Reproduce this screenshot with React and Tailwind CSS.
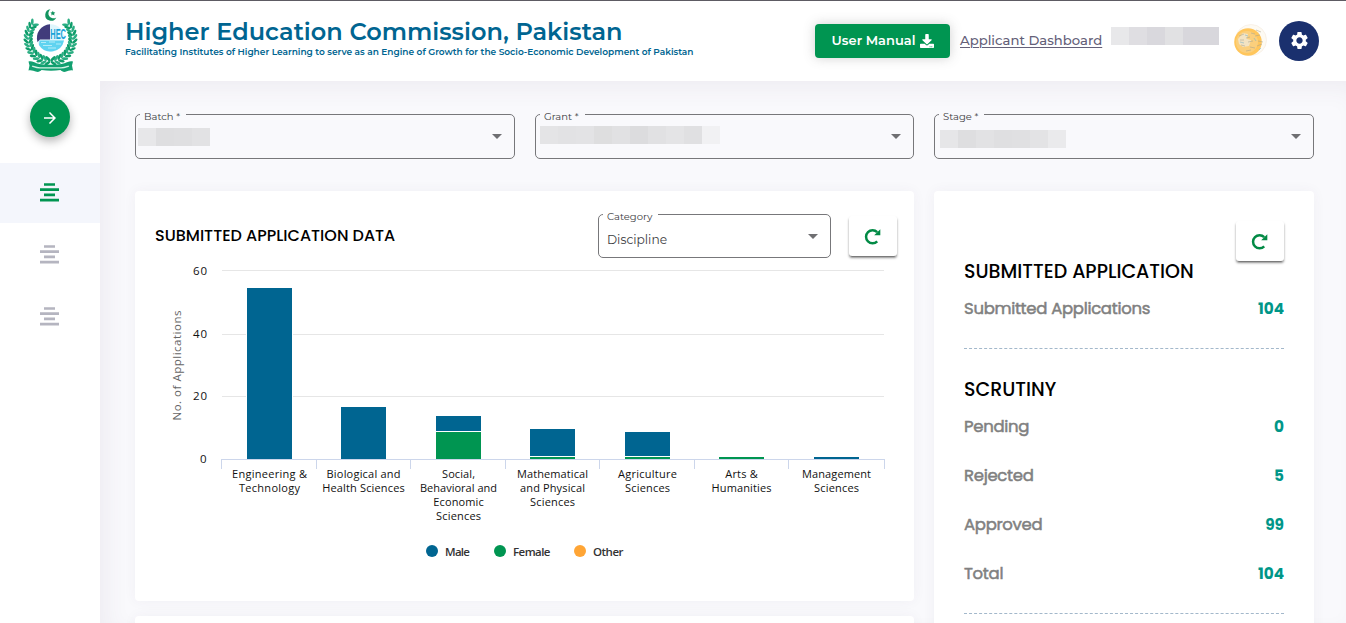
import React from "react";
import { FaDownload } from "react-icons/fa";
import { MdSettings, MdArrowForward } from "react-icons/md";

function Logo() {
  const leaves = [];
  for (let i = 0; i < 14; i++) {
    const a = ((138 + i * 9.6) * Math.PI) / 180;
    for (const side of [1, -1]) {
      for (const r of [20, 24.5]) {
        const cx = 27.5 + side * Math.cos(a) * r;
        const cy = 30.5 - Math.sin(a) * r * 1.02;
        const deg = (side * (-a * 180)) / Math.PI + (r === 24.5 ? 50 : 130) * side;
        leaves.push(
          <ellipse key={`${i}${side}${r}`} cx={cx} cy={cy} rx="3.300" ry="1.350" fill={i % 2 ? "#0f9c6a" : "#2bae83"} transform={`rotate(${deg} ${cx} ${cy})`} />
        );
      }
    }
  }
  return (
    <svg width="56" height="66" viewBox="0 0 56 66">
      {leaves}
      <path d="M27.500 1.200a5.800 5.800 0 1 0 5.800 8.200a5 5 0 1 1-5.800-8.200z" fill="#12945f" />
      <path d="M29.800 2.800l.8 1.500 1.700.2-1.200 1.200.3 1.700-1.600-.8-1.500.8.3-1.700-1.200-1.200 1.700-.2z" fill="#12945f" />
      <circle cx="27.500" cy="30" r="14.500" fill="#ffffff" />
      <circle cx="27.500" cy="30" r="13.700" fill="#dff6fc" />
      <path d="M27 16.300A13.700 13.700 0 0 0 14.500 34L17 31.500H27z" fill="#413b7b" />
      <path d="M16.500 32.500H41A13.700 13.700 0 0 1 16 37z" fill="#5fd3f0" />
      <path d="M18 34.500h5M26 34h6M20 37.500h9M25 40h8M33 36h5" stroke="#b4ecf8" strokeWidth="1" />
      <g transform="translate(27.300 30.500) scale(.48 1)">
        <text x="0" y="0" fontSize="15.500" fontWeight="700" fontFamily="Liberation Sans, sans-serif" fill="#1ba3d8">HEC</text>
      </g>
      <path d="M5.500 53.500c3.500-.8 5.500.6 8 1.800 8 2 20 2 28 0 3-1.200 5-2.600 8.500-1.800l-1 4 1 5c-3-.7-5 .6-7.500 1.300-2 .4-4-.5-5-1.700-6 1-13 1-19 0-1 1.200-3 2.100-5 1.700-3-.7-5-2-8-1.300l1-5z" fill="#12a070" />
      <path d="M9 58c3 1 5 1.800 8 1.800h21c3 0 5-.8 8-1.800" stroke="#d7f3e6" strokeWidth="1.200" fill="none" />
    </svg>
  );
}

function Blocks({ colors, className }) {
  return (
    <div className={`flex ${className}`}>
      {colors.map((c, i) => (
        <div key={i} className="h-[18px] w-[18px]" style={{ backgroundColor: c }} />
      ))}
    </div>
  );
}

function Caret() {
  return (
    <svg width="10" height="5" viewBox="0 0 10 5" className="shrink-0">
      <path d="M0 0h10L5 5z" fill="#6f6f72" />
    </svg>
  );
}

function SelectField({ label, children, className, contentClass }) {
  return (
    <fieldset className={`min-w-0 rounded-[5px] border border-[#77777a] ${className}`}>
      <legend className="ml-1 h-[13px] pr-[6px] pl-1 text-[10px] leading-[17px] text-[#3c3c3f]">{label}</legend>
      <div className={`flex items-start justify-between pr-3 ${contentClass}`}>{children}</div>
    </fieldset>
  );
}

function RefreshButton() {
  return (
    <button className="flex h-10 w-12 shrink-0 items-center justify-center rounded-[3px] bg-white pr-px shadow-[0_3px_1px_-2px_rgba(0,0,0,.25),0_2px_2px_0_rgba(0,0,0,.26),0_2px_3px_0_rgba(0,0,0,.2)]">
      <svg width="17" height="17" viewBox="0 0 17 17" fill="none">
        <path d="M13.200 13.300A6.500 6.500 0 1 1 13.200 4.200" stroke="#028a45" strokeWidth="2.500" />
        <path d="M16.300 1.200v6.100H10.200z" fill="#028a45" />
      </svg>
    </button>
  );
}

const BARS = [
  { x: 247, parts: [[288, 459, "#006591"]], lines: [["Engineering &", 75], ["Technology", 61]] },
  { x: 341, parts: [[407, 459, "#006591"]], lines: [["Biological and", 74], ["Health Sciences", 82.5]] },
  { x: 436, parts: [[416, 431, "#006591"], [432, 459, "#009551"]], lines: [["Social,", 33], ["Behavioral and", 77], ["Economic", 50.5], ["Sciences", 45]] },
  { x: 530, parts: [[429, 456, "#006591"], [457, 459, "#009551"]], lines: [["Mathematical", 71], ["and Physical", 65], ["Sciences", 45]] },
  { x: 625, parts: [[432, 456, "#006591"], [457, 459, "#009551"]], lines: [["Agriculture", 59], ["Sciences", 45]] },
  { x: 719, parts: [[457, 459, "#009551"]], lines: [["Arts &", 32.5], ["Humanities", 60]] },
  { x: 814, parts: [[457, 459, "#006591"]], lines: [["Management", 69], ["Sciences", 45]] },
];

function Chart() {
  return (
    <svg width="740" height="310" viewBox="155 260 740 310" fontFamily="'Lucida Grande','Lucida Sans Unicode','Open Sans',sans-serif" className="block">
      {[[270.5, "60"], [334.5, "40"], [396.5, "20"]].map(([y, t]) => (
        <g key={t}>
          <path d={`M222 ${y}H884`} stroke="#e6e6e6" />
          <text x="193" y={t === "60" ? 275 : y + 3.5} fontSize="11.500" fill="#111" textLength="14">{t}</text>
        </g>
      ))}
      <text x="200" y="463" fontSize="11.500" fill="#111">0</text>
      <text transform="translate(181 420.500) rotate(-90)" fontSize="11.500" fill="#666" textLength="110">No. of Applications</text>
      <path d="M221 459.500H885" stroke="#ccd6eb" />
      {[221.5, 316.5, 410.5, 505.5, 599.5, 694.5, 788.5, 884.5].map((x) => (
        <path key={x} d={`M${x} 460V469`} stroke="#ccd6eb" />
      ))}
      {BARS.map((b) => (
        <g key={b.x}>
          <rect x={b.x - 1} y={b.parts[0][0] - 1} width="47" height={460 - b.parts[0][0]} fill="#fff" />
          {b.parts.map(([y1, y2, c]) => (
            <rect key={y1} x={b.x} y={y1} width="45" height={y2 - y1} fill={c} />
          ))}
          {b.lines.map(([t, w], i) => (
            <text key={t} x={b.x + 22.5 - w / 2} y={478 + i * 14} fontSize="11" fill="#111" textLength={w}>{t}</text>
          ))}
        </g>
      ))}
      {[["Male", 432, 445, 25, "#006591"], ["Female", 500, 513, 37.500, "#009551"], ["Other", 580, 593, 30.500, "#ffa535"]].map(([t, cx, x, w, c]) => (
        <g key={t}>
          <circle cx={cx} cy="551" r="6" fill={c} />
          <text x={x} y="556" fontSize="11.500" fontWeight="600" fill="#333" textLength={w}>{t}</text>
        </g>
      ))}
    </svg>
  );
}

function MenuIcon({ color }) {
  return (
    <svg width="19" height="20" viewBox="0 0 19 20">
      <path d="M4 1.500H15M0 6.700H19M4 11.900H15M0 17.100H19" stroke={color} strokeWidth="2.700" />
    </svg>
  );
}

function Avatar() {
  return (
    <svg width="34" height="34" viewBox="0 0 34 34">
      <circle cx="18" cy="16" r="15.500" fill="#fdfaf3" stroke="#f6eee3" strokeWidth=".8" />
      <circle cx="15" cy="18" r="13.800" fill="#ffc65c" />
      <circle cx="14" cy="18" r="11" fill="#fbcf7c" />
      <path d="M5 15l5-6 5 1-1 5 4 1-2 6-6 1-4-3z" fill="#f3e3c2" />
      <path d="M6 12l5-2M7 16h4M13 14l4-1M15 18l5-1M8 21l4 1M18 9l4 1M22 12l5-1M25 17l5 1M24 22l5-2M17 23l5 1M13 27l5-1M23 6l5 2" stroke="#a9a58f" strokeWidth="1" opacity=".55" />
      <path d="M7 18l4 1M12 11l3 1M21 14l2 3M26 26l2-2" stroke="#84b6c4" strokeWidth="1" opacity=".6" />
    </svg>
  );
}

function StatRow({ label, value, className }) {
  return (
    <div className={`flex h-6 items-center justify-between ${className}`}>
      <span className="text-[16.5px] tracking-[-0.31px] text-[#808080] [-webkit-text-stroke:0.5px_#808080]">{label}</span>
      <span className="text-[15.3px] font-bold text-[#009688]">{value}</span>
    </div>
  );
}

export default function App() {
  return (
    <div className="flex h-[623px] w-[1346px] flex-col overflow-hidden bg-white font-['Montserrat','Inter',sans-serif]">
      <header className="flex h-[81px] shrink-0 items-start border-t border-[#5d5b63] bg-white">
        <div className="w-[125px] pt-[7px] pl-[23px]"><Logo /></div>
        <div className="w-[690px] pt-[17px] whitespace-nowrap text-[#006591]">
          <h1 className="text-[24px] leading-[28px] font-semibold tracking-[0.02px]">Higher Education Commission, Pakistan</h1>
          <p className="text-[9px] leading-[11px] font-semibold">Facilitating Institutes of Higher Learning to serve as an Engine of Growth for the Socio-Economic Development of Pakistan</p>
        </div>
        <button className="mt-[23px] flex h-[34px] w-[135px] shrink-0 items-center justify-center gap-[5px] rounded bg-[#009551] pl-px text-[13px] font-semibold whitespace-nowrap text-white shadow-[0_0_12px_rgba(90,90,90,.28)]">
          <span>User Manual</span>
          <FaDownload size={14} className="mb-px" />
        </button>
        <a className="mt-[29px] ml-[10px] w-[151px] text-[13.2px] leading-5 font-medium whitespace-nowrap text-[#646078] underline underline-offset-2">Applicant Dashboard</a>
        <Blocks className="mt-[26px] w-[122px] shrink-0" colors={["#e8e8ea", "#dfdee2", "#d9d8dd", "#e1e1e3", "#d8d7dc", "#d8d7dc"]} />
        <div className="mt-[23px] h-[34px] w-[46px]"><Avatar /></div>
        <button className="mt-5 flex h-10 w-10 shrink-0 items-center justify-center rounded-full bg-[#1a306e] pb-px text-white">
          <MdSettings size={21} />
        </button>
      </header>

      <div className="flex min-h-0 grow">
        <aside className="flex w-[100px] shrink-0 flex-col items-center bg-white">
          <button className="mt-4 mb-[26px] flex h-10 w-10 shrink-0 items-center justify-center rounded-full bg-[#009551] pt-px text-white shadow-[0_4px_10px_rgba(0,0,0,.3)]">
            <MdArrowForward size={18} />
          </button>
          <div className="flex h-[60px] w-full items-center justify-center bg-[#f4f6fc] pr-[2px] pb-px"><MenuIcon color="#009551" /></div>
          <div className="mt-0.5 flex h-[60px] w-full items-center justify-center pr-[2px] pb-px"><MenuIcon color="#b5b5c0" /></div>
          <div className="mt-0.5 flex h-[60px] w-full items-center justify-center pr-[2px] pb-px"><MenuIcon color="#b5b5c0" /></div>
        </aside>

        <main className="flex grow flex-col overflow-hidden bg-[#f9f9fc] pt-[27px] pr-8 pl-[35px] shadow-[inset_10px_10px_24px_-4px_rgba(82,63,105,.07)]">
          <div className="flex h-[51px] shrink-0 gap-5">
            <SelectField label="Batch *" className="h-[51px] w-[380px]" contentClass="pl-[2px]">
              <Blocks className="mt-[7px]" colors={["#e7e7e9", "#dedee0", "#dfdfe1", "#e2e2e4"]} />
              <div className="mt-[13px] flex"><Caret /></div>
            </SelectField>
            <SelectField label="Grant *" className="h-[51px] w-[379px]" contentClass="pl-[4px]">
              <Blocks className="mt-[5px]" colors={["#e4e4e6", "#e2e2e4", "#e3e3e5", "#dededf", "#e1e1e3", "#dcdcde", "#e1e1e3", "#e4e4e6", "#e0e0e2", "#f1f1f3"]} />
              <div className="mt-[13px] flex"><Caret /></div>
            </SelectField>
            <SelectField label="Stage *" className="h-[51px] w-[380px]" contentClass="pl-[5px]">
              <Blocks className="mt-[9px]" colors={["#e6e6e8", "#dedee0", "#e2e2e4", "#dfdfe1", "#e0e0e2", "#e3e3e5", "#eaeaec"]} />
              <div className="mt-[13px] flex"><Caret /></div>
            </SelectField>
          </div>

          <div className="mt-8 flex gap-5">
            <div className="flex w-[779px] flex-col gap-[15px]">
              <section className="h-[410px] rounded bg-white pl-5 shadow-[0_0_13px_rgba(82,63,105,.05)]">
                <div className="flex h-[69px] items-start pt-[17px]">
                  <h2 className="mt-[16px] w-[443px] font-['Poppins','Inter',sans-serif] text-[16px] leading-6 font-medium whitespace-nowrap text-black">SUBMITTED APPLICATION DATA</h2>
                  <SelectField label="Category" className="h-[50px] w-[233px]" contentClass="pl-[8px]">
                    <span className="mt-[9px] text-[12.25px] leading-5 text-[#3c3c3f]">Discipline</span>
                    <div className="mt-[13px] flex"><Caret /></div>
                  </SelectField>
                  <div className="mt-[8px] ml-[18px]"><RefreshButton /></div>
                </div>
                <Chart />
              </section>
              <section className="h-20 rounded bg-white shadow-[0_0_13px_rgba(82,63,105,.05)]" />
            </div>

            <section className="flex h-[520px] w-[380px] flex-col rounded bg-white px-[30px] pt-[30px] font-['Poppins','Inter',sans-serif] whitespace-nowrap shadow-[0_0_13px_rgba(82,63,105,.05)]">
              <div className="flex justify-end"><RefreshButton /></div>
              <h2 className="-mt-px text-[19px] leading-6 font-medium text-black">SUBMITTED APPLICATION</h2>
              <StatRow label="Submitted Applications" value="104" className="mt-[13px]" />
              <div className="mt-[27px] border-t border-dashed border-[#a3b8cb]" />
              <h2 className="mt-[29px] text-[19px] leading-6 font-medium text-black">SCRUTINY</h2>
              <StatRow label="Pending" value="0" className="mt-[13px]" />
              <StatRow label="Rejected" value="5" className="mt-[25px]" />
              <StatRow label="Approved" value="99" className="mt-[25px]" />
              <StatRow label="Total" value="104" className="mt-[25px]" />
              <div className="mt-[27px] border-t border-dashed border-[#a3b8cb]" />
            </section>
          </div>
        </main>
      </div>
    </div>
  );
}
